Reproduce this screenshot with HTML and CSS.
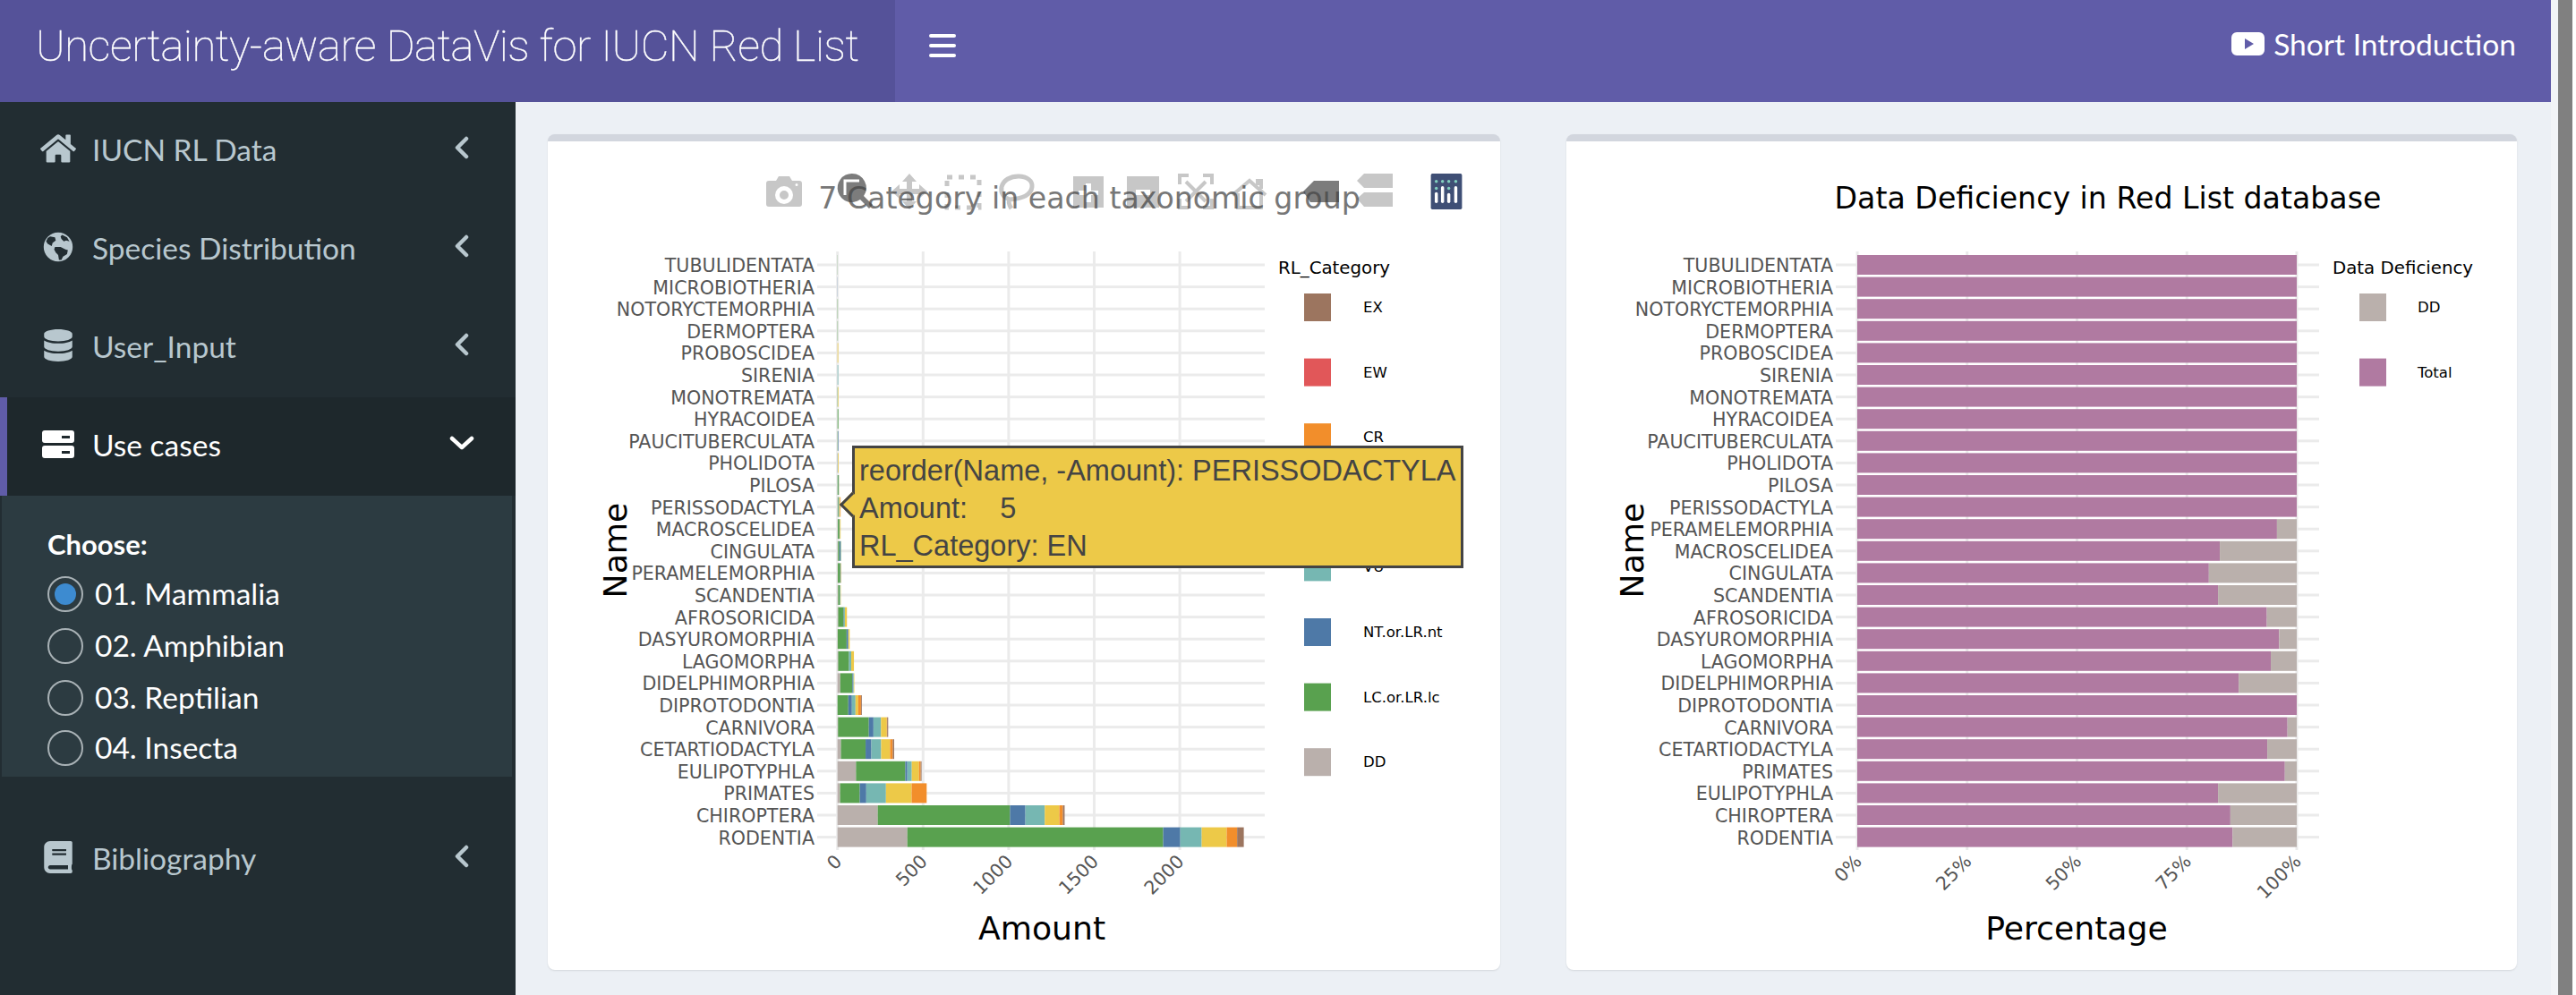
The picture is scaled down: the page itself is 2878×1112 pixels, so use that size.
FILE: index.html
```html
<!DOCTYPE html>
<html lang="en">
<head>
    <meta charset="UTF-8">
    <title>Uncertainty-aware DataVis for IUCN Red List</title>
    <link rel="stylesheet" href="styles.css">
</head>
<body>
    <div class="app">
        <header class="navbar">
            <div class="logo">Uncertainty-aware DataVis for IUCN Red List</div>
            <div class="toggle"><span></span><span></span><span></span></div>
            <a class="intro-link">
                <svg class="yt-icon" viewBox="0 0 37 26"><path fill="#fff" fill-rule="evenodd" d="M6 0h25a6 6 0 0 1 6 6v14a6 6 0 0 1-6 6H6a6 6 0 0 1-6-6V6a6 6 0 0 1 6-6zm9 7v12l10-6z"/></svg>
                Short Introduction
            </a>
        </header>
        <div class="main-row">
            <aside class="sidebar">
                <ul class="menu">
                    <li class="menu-item">
                        <svg class="menu-icon" viewBox="0 0 576 512"><path d="M280.37 148.26L96 300.11V464a16 16 0 0 0 16 16l112.06-.29a16 16 0 0 0 15.92-16V368a16 16 0 0 1 16-16h64a16 16 0 0 1 16 16v95.64a16 16 0 0 0 16 16.05L464 480a16 16 0 0 0 16-16V300L295.67 148.26a12.19 12.19 0 0 0-15.3 0zM571.6 251.47L488 182.56V44.05a12 12 0 0 0-12-12h-56a12 12 0 0 0-12 12v72.61L318.47 43a48 48 0 0 0-61 0L4.34 251.47a12 12 0 0 0-1.6 16.9l25.5 31A12 12 0 0 0 45.15 301l235.22-193.74a12.19 12.19 0 0 1 15.3 0L530.9 301a12 12 0 0 0 16.9-1.6l25.5-31a12 12 0 0 0-1.7-16.93z"/></svg>
                        <span class="menu-label">IUCN RL Data</span>
                        <svg class="chevron" viewBox="0 0 16 26"><path d="M13 3L3 13l10 10"/></svg>
                    </li>
                    <li class="menu-item">
                        <svg class="menu-icon" viewBox="0 0 36 40"><path fill-rule="evenodd" d="M18 2a18 18 0 1 1 0 36 18 18 0 0 1 0-36zM8 7l6 1 1 4-4 3-1 4-5-3-2-3 2-4zm15-2l6 3 3 5-4-1-3 1-3-3-1-3zM14 20l7 0 6 3 3 1-1 5-5 3-2 4-3 0-1-6-3-3-2-4z"/></svg>
                        <span class="menu-label">Species Distribution</span>
                        <svg class="chevron" viewBox="0 0 16 26"><path d="M13 3L3 13l10 10"/></svg>
                    </li>
                    <li class="menu-item">
                        <svg class="menu-icon" viewBox="0 0 448 512"><path d="M448 73.143v45.714C448 159.143 347.667 192 224 192S0 159.143 0 118.857V73.143C0 32.857 100.333 0 224 0s224 32.857 224 73.143zM448 176v102.857C448 319.143 347.667 352 224 352S0 319.143 0 278.857V176c48.125 33.143 136.208 48.572 224 48.572S399.874 209.143 448 176zm0 160v102.857C448 479.143 347.667 512 224 512S0 479.143 0 438.857V336c48.125 33.143 136.208 48.572 224 48.572S399.874 369.143 448 336z"/></svg>
                        <span class="menu-label">User_Input</span>
                        <svg class="chevron" viewBox="0 0 16 26"><path d="M13 3L3 13l10 10"/></svg>
                    </li>
                    <li class="menu-item active">
                        <svg class="menu-icon" viewBox="0 0 36 36"><path fill-rule="evenodd" d="M3 3h30a3 3 0 0 1 3 3v8a3 3 0 0 1-3 3H3a3 3 0 0 1-3-3V6a3 3 0 0 1 3-3zm19 6v3h9V9zM3 20h30a3 3 0 0 1 3 3v8a3 3 0 0 1-3 3H3a3 3 0 0 1-3-3v-8a3 3 0 0 1 3-3zm19 6v3h9v-3z"/></svg>
                        <span class="menu-label">Use cases</span>
                        <svg class="chevron chevron-down" viewBox="0 0 28 16"><path d="M3 3l11 10L25 3"/></svg>
                    </li>
                    <li class="submenu">
                        <div class="choose-label">Choose:</div>
                        <div class="radio-row">
                            <span class="radio checked"></span><span class="radio-label">01. Mammalia</span>
                        </div>
                        <div class="radio-row">
                            <span class="radio"></span><span class="radio-label">02. Amphibian</span>
                        </div>
                        <div class="radio-row">
                            <span class="radio"></span><span class="radio-label">03. Reptilian</span>
                        </div>
                        <div class="radio-row last">
                            <span class="radio"></span><span class="radio-label">04. Insecta</span>
                        </div>
                    </li>
                    <li class="menu-item after-submenu">
                        <svg class="menu-icon" viewBox="0 0 448 512"><path d="M448 360V24c0-13.3-10.7-24-24-24H96C43 0 0 43 0 96v320c0 53 43 96 96 96h328c13.3 0 24-10.7 24-24v-16c0-7.5-3.5-14.3-8.9-18.7-4.2-15.4-4.2-59.3 0-74.7 5.4-4.3 8.9-11.1 8.9-18.6zM128 134c0-3.3 2.7-6 6-6h212c3.3 0 6 2.7 6 6v20c0 3.3-2.7 6-6 6H134c-3.3 0-6-2.7-6-6v-20zm0 64c0-3.3 2.7-6 6-6h212c3.3 0 6 2.7 6 6v20c0 3.3-2.7 6-6 6H134c-3.3 0-6-2.7-6-6v-20zm253.4 250H96c-17.7 0-32-14.3-32-32 0-17.6 14.4-32 32-32h285.4c-1.9 17.1-1.9 46.9 0 64z"/></svg>
                        <span class="menu-label">Bibliography</span>
                        <svg class="chevron" viewBox="0 0 16 26"><path d="M13 3L3 13l10 10"/></svg>
                    </li>
                </ul>
            </aside>
            <main class="content">
                <section class="box">
                    <svg id="amountChart" class="chart" width="1064" height="926"></svg>
                    <div class="modebar">
                        <div class="mode-group">
                            <svg class="mode-btn" viewBox="0 0 40 40"><path fill-rule="evenodd" d="M3 8h8l3-5h12l3 5h8a3 3 0 0 1 3 3v23a3 3 0 0 1-3 3H3a3 3 0 0 1-3-3V11a3 3 0 0 1 3-3zm17 6a10 10 0 1 0 0 20 10 10 0 0 0 0-20zm0 5a5 5 0 1 1 0 10 5 5 0 0 1 0-10zm14-8a1.500 1.500 0 1 0 0 3 1.500 1.500 0 0 0 0-3z"/></svg>
                        </div>
                        <div class="mode-group">
                            <svg class="mode-btn on" viewBox="0 0 40 40"><path d="M16 0a16 16 0 0 1 13 25l10 10-4 4-10-10A16 16 0 1 1 16 0z"/><path class="mode-cut" d="M8 24V8h16"/></svg>
                            <svg class="mode-btn" viewBox="0 0 40 40"><path d="M20 0l8 9h-5v8h8v-5l9 8-9 8v-5h-8v8h5l-8 9-8-9h5v-8H9v5l-9-8 9-8v5h8V9h-5z"/></svg>
                            <svg class="mode-btn" viewBox="0 0 40 40"><path class="mode-dash" d="M2 4h36v34H2z"/></svg>
                            <svg class="mode-btn" viewBox="0 0 40 40"><path class="mode-line" d="M12 29C4 26 2 21 3 15 5 7 13 3 22 3c9 0 16 5 15 12-1 8-10 13-25 14zm0 0c-2 3 0 7 2 10"/></svg>
                        </div>
                        <div class="mode-group">
                            <svg class="mode-btn" viewBox="0 0 40 40"><path fill-rule="evenodd" d="M3 3h34v35H3zm14 8v8H9v5h8v8h6v-8h8v-5h-8v-8z"/></svg>
                            <svg class="mode-btn" viewBox="0 0 40 40"><path fill-rule="evenodd" d="M3 3h36v35H3zm10 15v6h16v-6z"/></svg>
                            <svg class="mode-btn" viewBox="0 0 40 40"><path class="mode-line thin" d="M2 12V2h10M28 2h10v10M38 28v10H28M12 38H2V28M9 9l22 22M31 9L9 31"/></svg>
                            <svg class="mode-btn" viewBox="0 0 40 40"><path class="mode-line thin" d="M1 24L20 8l18 16M7 22v16h26V22M29 13V8h4v9"/></svg>
                        </div>
                        <div class="mode-group">
                            <svg class="mode-btn on" viewBox="0 0 40 40"><path d="M0 20L12 8h28v24H8z"/></svg>
                            <svg class="mode-btn" viewBox="0 0 40 40"><path d="M0 8l8-8h32v16H8zM0 28l8-7h32v16H8z"/></svg>
                        </div>
                        <div class="mode-group">
                            <svg class="plotly-logo" viewBox="0 0 40 46">
                                <rect width="40" height="46" rx="2" fill="#3f4f75"/>
                                <g fill="#80cfbe"><circle cx="7" cy="10" r="2"/><circle cx="15" cy="10" r="2"/><circle cx="23" cy="10" r="2"/><circle cx="32" cy="10" r="2"/><circle cx="7" cy="19" r="2"/><circle cx="23" cy="19" r="2"/></g>
                                <g fill="#fff"><rect x="5" y="24" width="4" height="14" rx="2"/><rect x="13" y="16" width="4" height="22" rx="2"/><rect x="21" y="25" width="4" height="13" rx="2"/><rect x="30" y="16" width="4" height="22" rx="2"/></g>
                            </svg>
                        </div>
                    </div>
                    <div class="tooltip">
                        <div>reorder(Name, -Amount): PERISSODACTYLA</div>
                        <div>Amount: &nbsp; &nbsp;5</div>
                        <div>RL_Category: EN</div>
                    </div>
                </section>
                <section class="box">
                    <svg id="deficiencyChart" class="chart" width="1062" height="926"></svg>
                </section>
            </main>
        </div>
    </div>
    <div class="scroll-gutter"><div class="scroll-thumb"></div></div>

    <script src="chart.js"></script>
</body>
</html>
```

FILE: styles.css
```css
body, html {
    height: 100%;
    margin: 0;
    padding: 0;
    overflow: hidden;
    background-color: #fff;
    font-family: Lato, 'Noto Sans', sans-serif;
}
body {
    display: flex;
}
.app {
    width: 2850px;
    height: 1112px;
    display: flex;
    flex-direction: column;
    background-color: #ecf0f5;
}
.scroll-gutter {
    width: 24px;
    padding-left: 8px;
    background-color: #f2f4f7;
    box-sizing: border-box;
}
.scroll-thumb {
    width: 16px;
    height: 1112px;
    background-color: #808080;
}

/* top bar */
.navbar {
    height: 114px;
    flex: none;
    display: flex;
    align-items: center;
    background-color: #605ca8;
    color: #fff;
}
.logo {
    width: 1000px;
    height: 114px;
    line-height: 104px;
    padding-left: 40px;
    box-sizing: border-box;
    background-color: #555299;
    font-family: Roboto, sans-serif;
    font-weight: 100;
    font-size: 49px;
    letter-spacing: -0.45px;
    -webkit-text-stroke: 0.4px #fff;
    white-space: nowrap;
}
.toggle {
    margin-left: 38px;
    margin-bottom: 12px;
    width: 30px;
    display: flex;
    flex-direction: column;
    gap: 7px;
}
.toggle span {
    height: 4px;
    border-radius: 2px;
    background-color: #fff;
}
.intro-link {
    margin-left: auto;
    margin-right: 39px;
    margin-bottom: 16px;
    display: flex;
    align-items: center;
    gap: 10px;
    font-size: 33.6px;
}
.yt-icon {
    width: 37px;
    height: 26px;
}

/* sidebar */
.main-row {
    flex: 1;
    display: flex;
    min-height: 0;
}
.sidebar {
    width: 576px;
    flex: none;
    background-color: #222d32;
    color: #b8c7ce;
    font-size: 33.5px;
}
.menu {
    list-style: none;
    margin: 0;
    padding: 0;
}
.menu-item {
    height: 110px;
    display: flex;
    align-items: center;
    padding-left: 45px;
    padding-right: 52px;
    box-sizing: border-box;
}
.menu-item.active {
    background-color: #1e282c;
    border-left: 8px solid #605ca8;
    padding-left: 37px;
    color: #fff;
}
.after-submenu {
    margin-top: 38px;
}
.menu-icon {
    width: 40px;
    height: 36px;
    flex: none;
    fill: #b8c7ce;
    margin-top: -6px;
}
.active .menu-icon {
    fill: #fff;
}
.menu-label {
    margin-left: 18px;
    margin-top: -4px;
}
.chevron {
    margin-left: auto;
    width: 16px;
    height: 26px;
    margin-top: -8px;
    fill: none;
    stroke: #b8c7ce;
    stroke-width: 4.500;
    stroke-linecap: round;
    stroke-linejoin: round;
}
.chevron-down {
    width: 28px;
    height: 16px;
    margin-right: -6px;
    stroke: #fff;
}
.submenu {
    margin: 0 4px 0 2px;
    height: 314px;
    padding: 36px 0 0 51px;
    box-sizing: border-box;
    background-color: #2c3b41;
    color: #fff;
}
.choose-label {
    height: 36px;
    line-height: 36px;
    font-weight: 700;
    font-size: 31px;
    margin-bottom: 9px;
}
.radio-row {
    height: 58px;
    display: flex;
    align-items: center;
    gap: 13px;
}
.radio-row.last {
    margin-top: -2px;
}
.radio-label {
    margin-top: -3px;
}
.radio {
    width: 40px;
    height: 40px;
    flex: none;
    box-sizing: border-box;
    border: 2px solid #a8b1b5;
    border-radius: 50%;
    display: flex;
    align-items: center;
    justify-content: center;
}
.radio.checked::after {
    content: '';
    width: 24px;
    height: 24px;
    border-radius: 50%;
    background-color: #3d8bd0;
}

/* plots */
.content {
    flex: 1;
    display: grid;
    grid-template-columns: 1064px 1062px;
    gap: 74px;
    padding: 36px 38px 28px 36px;
    box-sizing: border-box;
}
.box {
    position: relative;
    border-top: 8px solid #d2d6de;
    border-radius: 8px;
    background-color: #fff;
    box-shadow: 0 1px 2px rgba(0,0,0,0.1);
}
.chart {
    display: block;
}
.tick-label {
    font-family: 'DejaVu Sans', sans-serif;
    font-size: 20.600px;
    fill: #555;
}
.axis-title {
    font-family: 'DejaVu Sans', sans-serif;
    font-size: 36.200px;
    fill: #000;
}
.plot-title {
    font-family: 'DejaVu Sans', sans-serif;
    font-size: 33.200px;
    fill: #000;
}
.plot-title.dimmed {
    fill: #777;
}
.legend-title {
    font-family: 'DejaVu Sans', sans-serif;
    font-size: 19.800px;
    fill: #000;
}
.legend-label {
    font-family: 'DejaVu Sans', sans-serif;
    font-size: 16.500px;
    fill: #000;
}

/* toolbar over the first plot */
.modebar {
    position: absolute;
    top: 36px;
    right: 40px;
    display: flex;
    gap: 40px;
}
.mode-group {
    display: flex;
    gap: 20px;
}
.mode-btn {
    width: 40px;
    height: 40px;
    fill: rgba(68,68,68,0.3);
    overflow: visible;
}
.mode-btn.on {
    fill: rgba(68,68,68,0.7);
}
.mode-cut {
    fill: none;
    stroke: #fff;
    stroke-width: 3;
}
.mode-dash {
    fill: none;
    stroke: rgba(68,68,68,0.3);
    stroke-width: 5;
    stroke-dasharray: 6 7;
}
.mode-line {
    fill: none;
    stroke: rgba(68,68,68,0.3);
    stroke-width: 5;
}
.mode-line.thin {
    stroke-width: 4;
}
.plotly-logo {
    width: 40px;
    height: 40px;
}

.tooltip {
    position: absolute;
    left: 340px;
    top: 340px;
    width: 683px;
    height: 137px;
    box-sizing: border-box;
    padding: 4px 0 0 5px;
    border: 3px solid #444;
    background-color: #edc948;
    color: #444;
    font-family: 'Liberation Sans', Arial, sans-serif;
    font-size: 32.500px;
    line-height: 42px;
    white-space: nowrap;
}
.tooltip::before {
    content: '';
    position: absolute;
    left: -13px;
    top: 53px;
    width: 20px;
    height: 20px;
    box-sizing: border-box;
    border-left: 3px solid #444;
    border-bottom: 3px solid #444;
    background-color: #edc948;
    transform: rotate(45deg);
}
```

FILE: chart.js
```js
const SVG_NS = 'http://www.w3.org/2000/svg';

// same order as the stacks, left to right
const categories = [
    {name: 'DD', color: '#bab0ac'},
    {name: 'LC.or.LR.lc', color: '#59a14f'},
    {name: 'NT.or.LR.nt', color: '#4e79a7'},
    {name: 'VU', color: '#76b7b2'},
    {name: 'EN', color: '#edc948'},
    {name: 'CR', color: '#f28e2b'},
    {name: 'EW', color: '#e15759'},
    {name: 'EX', color: '#9c755f'}
];

// Amount per category, DD first
const amountRows = [
    ['TUBULIDENTATA',    [0, 1]],
    ['MICROBIOTHERIA',   [0, 0, 1]],
    ['NOTORYCTEMORPHIA', [0, 2]],
    ['DERMOPTERA',       [0, 2]],
    ['PROBOSCIDEA',      [0, 0, 0, 0, 4]],
    ['SIRENIA',          [0, 0, 0, 4]],
    ['MONOTREMATA',      [0, 2, 0, 0, 3]],
    ['HYRACOIDEA',       [0, 5]],
    ['PAUCITUBERCULATA', [0, 2, 3]],
    ['PHOLIDOTA',        [0, 0, 1, 1, 4]],
    ['PILOSA',           [0, 6, 1, 1, 1]],
    ['PERISSODACTYLA',   [1, 4, 1, 4, 5, 3]],
    ['MACROSCELIDEA',    [2, 9, 1, 2, 4]],
    ['CINGULATA',        [3, 8, 6, 4, 1]],
    ['PERAMELEMORPHIA',  [2, 14, 1, 2, 2, 0, 0, 1]],
    ['SCANDENTIA',       [4, 10, 1, 2, 2]],
    ['AFROSORICIDA',     [4, 32, 2, 5, 12]],
    ['DASYUROMORPHIA',   [1, 52, 9, 2, 7]],
    ['LAGOMORPHA',       [4, 63, 1, 12, 16]],
    ['DIDELPHIMORPHIA',  [16, 71, 5, 3, 3]],
    ['DIPROTODONTIA',    [0, 63, 21, 21, 16, 16, 0, 5]],
    ['CARNIVORA',        [3, 180, 27, 44, 34, 2, 0, 6]],
    ['CETARTIODACTYLA',  [20, 144, 34, 57, 52, 16, 0, 8]],
    ['EULIPOTYPHLA',     [108, 288, 12, 26, 42, 10, 0, 5]],
    ['PRIMATES',         [15, 115, 38, 115, 150, 88]],
    ['CHIROPTERA',       [235, 773, 90, 113, 85, 21, 0, 10]],
    ['RODENTIA',         [408, 1495, 100, 125, 146, 61, 0, 39]]
];

// share of assessed species that is not DD, in percent
const deficiencyRows = [
    ['TUBULIDENTATA', 100], ['MICROBIOTHERIA', 100], ['NOTORYCTEMORPHIA', 100],
    ['DERMOPTERA', 100], ['PROBOSCIDEA', 100], ['SIRENIA', 100], ['MONOTREMATA', 100],
    ['HYRACOIDEA', 100], ['PAUCITUBERCULATA', 100], ['PHOLIDOTA', 100], ['PILOSA', 100],
    ['PERISSODACTYLA', 100], ['PERAMELEMORPHIA', 95.5], ['MACROSCELIDEA', 82.5],
    ['CINGULATA', 80], ['SCANDENTIA', 82.1], ['AFROSORICIDA', 93.2], ['DASYUROMORPHIA', 96],
    ['LAGOMORPHA', 94.1], ['DIDELPHIMORPHIA', 86.8], ['DIPROTODONTIA', 100], ['CARNIVORA', 97.9],
    ['CETARTIODACTYLA', 93.3], ['PRIMATES', 97.3], ['EULIPOTYPHLA', 82.1], ['CHIROPTERA', 84.9],
    ['RODENTIA', 85.4]
];

const PLOT_TOP = 123;
const PLOT_BOTTOM = 792;
const FIRST_ROW = 138;
const ROW_STEP = 24.6;
const BAR_HEIGHT = 22;

function add(svg, tag, attrs, text) {
    const el = document.createElementNS(SVG_NS, tag);
    Object.keys(attrs).forEach(key => el.setAttribute(key, attrs[key]));
    if (text !== undefined) el.textContent = text;
    svg.appendChild(el);
    return el;
}

function drawFrame(svg, rows, frame) {
    frame.ticks.forEach(tick => {
        add(svg, 'rect', {x: tick.x - 1.5, y: PLOT_TOP, width: 3, height: PLOT_BOTTOM - PLOT_TOP, fill: '#ebebeb'});
    });
    rows.forEach((row, i) => {
        const y = FIRST_ROW + i * ROW_STEP;
        add(svg, 'rect', {x: frame.left, y: y - 1.5, width: frame.right - frame.left, height: 3, fill: '#ebebeb'});
        add(svg, 'text', {x: 298, y: y + 8, 'text-anchor': 'end', class: 'tick-label'}, row[0]);
    });
    frame.ticks.forEach(tick => {
        const x = tick.x + 6;
        const y = 806;
        add(svg, 'text', {x: x, y: y, 'text-anchor': 'end', class: 'tick-label', transform: `rotate(-45 ${x} ${y})`}, tick.label);
    });
    add(svg, 'text', {x: frame.titleX, y: 75, 'text-anchor': 'middle', class: frame.titleClass}, frame.title);
    add(svg, 'text', {x: frame.xTitleX, y: 892, 'text-anchor': 'middle', class: 'axis-title'}, frame.xTitle);
    const nameY = 457;
    add(svg, 'text', {x: frame.nameX, y: nameY, 'text-anchor': 'middle', class: 'axis-title', transform: `rotate(-90 ${frame.nameX} ${nameY})`}, 'Name');
}

function drawLegend(svg, legend) {
    add(svg, 'text', {x: legend.titleX, y: 148, class: 'legend-title'}, legend.title);
    legend.items.forEach((item, i) => {
        const y = 170 + i * 72.6;
        add(svg, 'rect', {x: legend.swatchX, y: y, width: 30, height: 31, fill: item.color});
        add(svg, 'text', {x: legend.textX, y: y + 21, class: 'legend-label'}, item.name);
    });
}

function drawAmountChart() {
    const svg = document.getElementById('amountChart');
    const zeroX = 323.7;
    const pxPerUnit = 0.1912;
    const ticks = [0, 500, 1000, 1500, 2000].map(v => ({x: zeroX + v * pxPerUnit, label: String(v)}));

    drawFrame(svg, amountRows, {
        ticks: ticks, left: 301, right: 801,
        title: '7 Category in each taxonomic group', titleX: 605, titleClass: 'plot-title dimmed',
        xTitle: 'Amount', xTitleX: 552, nameX: 88
    });

    amountRows.forEach((row, i) => {
        let x = zeroX;
        const y = FIRST_ROW + i * ROW_STEP - BAR_HEIGHT / 2;
        row[1].forEach((amount, c) => {
            if (!amount) return;
            const w = amount * pxPerUnit;
            add(svg, 'rect', {x: x, y: y, width: w, height: BAR_HEIGHT, fill: categories[c].color});
            x += w;
        });
    });

    drawLegend(svg, {
        title: 'RL_Category', titleX: 816, swatchX: 845, textX: 911,
        items: categories.slice().reverse()
    });
}

function drawDeficiencyChart() {
    const svg = document.getElementById('deficiencyChart');
    const zeroX = 325;
    const pxPerPercent = 4.91;
    const ticks = [0, 25, 50, 75, 100].map(v => ({x: zeroX + v * pxPerPercent, label: v + '%'}));

    drawFrame(svg, deficiencyRows, {
        ticks: ticks, left: 301, right: 841,
        title: 'Data Deficiency in Red List database', titleX: 605, titleClass: 'plot-title',
        xTitle: 'Percentage', xTitleX: 570, nameX: 86
    });

    deficiencyRows.forEach((row, i) => {
        const y = FIRST_ROW + i * ROW_STEP - BAR_HEIGHT / 2;
        const w = row[1] * pxPerPercent;
        add(svg, 'rect', {x: zeroX, y: y, width: w, height: BAR_HEIGHT, fill: '#b07aa1'});
        if (row[1] < 100) {
            add(svg, 'rect', {x: zeroX + w, y: y, width: 491 - w, height: BAR_HEIGHT, fill: '#bab0ac'});
        }
    });

    drawLegend(svg, {
        title: 'Data Deficiency', titleX: 856, swatchX: 886, textX: 951,
        items: [{name: 'DD', color: '#bab0ac'}, {name: 'Total', color: '#b07aa1'}]
    });
}

drawAmountChart();
drawDeficiencyChart();
```
